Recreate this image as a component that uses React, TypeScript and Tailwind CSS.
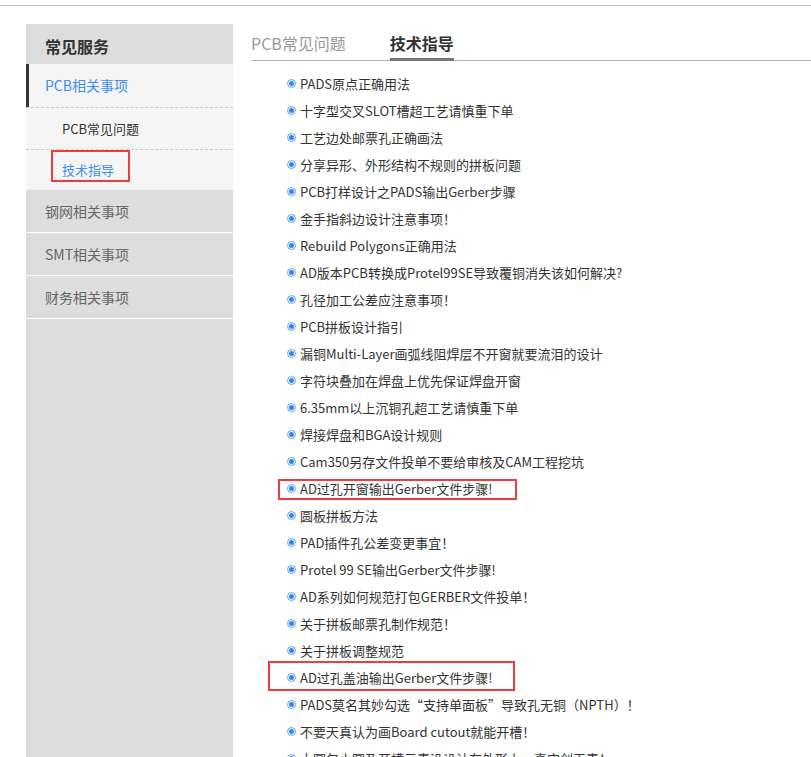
import React from "react";

const articles = [
  "PADS原点正确用法",
  "十字型交叉SLOT槽超工艺请慎重下单",
  "工艺边处邮票孔正确画法",
  "分享异形、外形结构不规则的拼板问题",
  "PCB打样设计之PADS输出Gerber步骤",
  "金手指斜边设计注意事项！",
  "Rebuild Polygons正确用法",
  "AD版本PCB转换成Protel99SE导致覆铜消失该如何解决?",
  "孔径加工公差应注意事项！",
  "PCB拼板设计指引",
  "漏铜Multi-Layer画弧线阻焊层不开窗就要流泪的设计",
  "字符块叠加在焊盘上优先保证焊盘开窗",
  "6.35mm以上沉铜孔超工艺请慎重下单",
  "焊接焊盘和BGA设计规则",
  "Cam350另存文件投单不要给审核及CAM工程挖坑",
  "AD过孔开窗输出Gerber文件步骤!",
  "圆板拼板方法",
  "PAD插件孔公差变更事宜！",
  "Protel 99 SE输出Gerber文件步骤!",
  "AD系列如何规范打包GERBER文件投单！",
  "关于拼板邮票孔制作规范！",
  "关于拼板调整规范",
  "AD过孔盖油输出Gerber文件步骤!",
  "PADS莫名其妙勾选“支持单面板”导致孔无铜（NPTH）！",
  "不要天真认为画Board cutout就能开槽！",
  "大圆包小圆及开槽元素没设计在外形上，真实创无责！",
];

function Bullet() {
  return (
    <span className="flex h-[9px] w-[9px] shrink-0 items-center justify-center rounded-full border border-[#5aa4f5] bg-white">
      <span className="h-[5px] w-[5px] rounded-full bg-[#2f86ee]" />
    </span>
  );
}

export default function App() {
  return (
    <div
      className="min-h-screen bg-white pt-[5px] text-[#333]"
      style={{ fontFamily: '"Noto Sans CJK SC", "Noto Sans", sans-serif' }}
    >
      <div className="border-t border-[#bdbdbd]" />
      <div className="flex items-stretch pt-[18px]">
        {/* sidebar */}
        <aside className="ml-[26px] w-[207px] shrink-0 bg-[#dddddd]">
          <div className="flex h-[40px] items-center pl-[19px] pt-[3px] text-[16px] font-bold text-[#333]">
            常见服务
          </div>
          <div className="border-b border-dashed border-[#c8c8c8] bg-[#f5f5f5]">
            <div className="flex h-[43px] items-center border-l-[3px] border-[#333] pl-[16px] text-[14px] text-[#3d8ef0]">
              PCB相关事项
            </div>
          </div>
          <div className="flex h-[42px] items-center border-b border-dashed border-[#c8c8c8] bg-[#f5f5f5] pl-[36px] text-[13px] text-[#333]">
            PCB常见问题
          </div>
          <div className="flex h-[40px] items-center bg-[#f5f5f5] pl-[36px] text-[13px] text-[#3d8ef0]">
            <span className="relative">
              技术指导
              <span className="absolute left-[-11px] top-[-10px] h-[32px] w-[79px] border-2 border-[#f03c3c]" />
            </span>
          </div>
          {["钢网相关事项", "SMT相关事项", "财务相关事项"].map((t) => (
            <div
              key={t}
              className="flex h-[43px] items-center border-b border-white pl-[19px] text-[14px] text-[#666]"
            >
              {t}
            </div>
          ))}
        </aside>

        {/* main */}
        <main className="ml-[18px] flex-1">
          <div className="flex h-[37px] items-end gap-[44px] border-b border-[#bbbbbb]">
            <div className="pb-[6px] text-[16px] leading-[22px] text-[#999]">PCB常见问题</div>
            <div className="-mb-px border-b-[3px] border-[#777] pb-[4px] text-[16px] font-bold leading-[22px] text-[#333]">
              技术指导
            </div>
          </div>
          <ul className="mt-[9px] pl-[36px]">
            {articles.map((a, i) => (
              <li key={i} className="relative flex h-[27px] items-center gap-[4px] text-[13px] text-[#333]">
                <Bullet />
                <span className="whitespace-nowrap">{a}</span>
                {i === 15 && (
                  <span className="absolute left-[-9px] top-[4px] h-[21px] w-[239px] border-2 border-[#f03c3c]" />
                )}
                {i === 22 && (
                  <span className="absolute left-[-19px] top-[-3px] h-[30px] w-[247px] border-2 border-[#f03c3c]" />
                )}
              </li>
            ))}
          </ul>
        </main>
      </div>
    </div>
  );
}
